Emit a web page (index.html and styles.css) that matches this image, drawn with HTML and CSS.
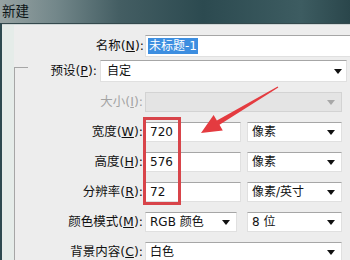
FILE: index.html
```html
<!DOCTYPE html>
<html>
<head>
	<meta charset="utf-8">
	<title>新建</title>
	<link rel="stylesheet" href="styles.css">
</head>
<body>
	<div class="window">
		<div class="titlebar">新建</div>
		<div class="frame">
			<div class="row-name">
				<label class="lbl">名称(<u>N</u>):</label>
				<div class="field"><span class="sel">未标题-1</span></div>
			</div>
			<div class="group">
				<div class="row-preset">
					<label class="lbl">预设(<u>P</u>):</label>
					<div class="field drop">自定</div>
				</div>
				<div class="grid">
					<label class="lbl off">大小(<u>I</u>):</label>
					<div class="field drop wide disabled"></div>

					<label class="lbl">宽度(<u>W</u>):</label>
					<div class="field">720</div>
					<div class="field drop">像素</div>

					<label class="lbl">高度(<u>H</u>):</label>
					<div class="field">576</div>
					<div class="field drop">像素</div>

					<label class="lbl">分辨率(<u>R</u>):</label>
					<div class="field">72</div>
					<div class="field drop">像素/英寸</div>

					<label class="lbl">颜色模式(<u>M</u>):</label>
					<div class="field drop short">RGB 颜色</div>
					<div class="field drop">8 位</div>

					<label class="lbl">背景内容(<u>C</u>):</label>
					<div class="field drop wide">白色</div>
				</div>
			</div>
		</div>
		<!-- annotation over the dialog -->
		<div class="mark"></div>
		<svg class="arrow" width="350" height="260" viewBox="0 0 350 260">
			<polygon fill="#e43b40" points="277.7,86.6 216.9,120.6 213.6,115.0 201,133 222.8,130.4 219.5,124.8 278.3,87.4"/>
		</svg>
	</div>
</body>
</html>
```

FILE: styles.css
```css
*{
	margin: 0;
	padding: 0;
	box-sizing: border-box;
}

body{
	width: 350px;
	height: 260px;
	overflow: hidden;
	background: #ededed;
	font-family: "DejaVu Sans", "Noto Sans CJK SC", sans-serif;
	font-size: 12px;
	color: #111;
}

.window{
	position: relative;
	width: 350px;
	height: 260px;
}

.titlebar{
	height: 23px;
	padding: 3px 0 0 2px;
	font-size: 13.5px;
	line-height: 16px;
	color: #0c1416;
	background: linear-gradient(90deg, #97a3a3 0%, #73878a 16%, #445e63 34%, #2c4a50 58%, #3d5c61 86%, #2a464b 100%);
}

.frame{
	height: 237px;
	border-top: 1px solid #34494d;
	border-left: 2px solid #2d4a50;
	background: linear-gradient(90deg, #e5ece9 0, #e5ece9 12px, #ededed 12px);
	box-shadow: inset 0 1px 0 #cfd6d6;
	padding-top: 11px;
}

.lbl{
	text-align: right;
	white-space: nowrap;
	line-height: 20px;
	font-size: 12.5px;
}

.lbl u{
	text-decoration: underline;
}

.lbl.off{
	color: #a3a3a3;
}

.field{
	height: 20px;
	background: #fff;
	border: 1px solid #e0e0e0;
	border-top-color: #a6a6a6;
	padding-left: 4px;
	line-height: 18px;
	white-space: nowrap;
	display: flex;
	align-items: center;
}

.drop{
	padding-right: 6px;
}

.drop::after{
	content: "";
	margin-left: auto;
	border-left: 4px solid transparent;
	border-right: 4px solid transparent;
	border-top: 5px solid #111;
}

.disabled{
	background: #e4e4e4;
	border-color: #d3d3d3;
}

.disabled::after{
	border-top-color: #a8a8a8;
}

.row-name{
	display: grid;
	grid-template-columns: 130px 220px;
	margin-left: 13px;
}

.row-name .lbl{
	padding-right: 1px;
	line-height: 22px;
}

.row-name .field{
	height: 22px;
	padding-left: 2px;
}

.sel{
	background: #3d8ee0;
	color: #fff;
	padding: 0 1px;
	line-height: 16px;
}

.group{
	margin-top: 3px;
	margin-left: 12px;
	padding-left: 1px;
	background:
		linear-gradient(#a6a6a6, #a6a6a6) 0 7px / 1px 100% no-repeat,
		linear-gradient(#a6a6a6, #a6a6a6) 0 7px / 14px 1px no-repeat;
}

.row-preset{
	display: grid;
	grid-template-columns: 85px 247px;
	margin-bottom: 10px;
}

.row-preset .lbl{
	padding-right: 3px;
	line-height: 22px;
}

.row-preset .field{
	height: 22px;
	padding-left: 6px;
	padding-right: 4px;
}

.grid{
	display: grid;
	grid-template-columns: 124px 96px 95px;
	grid-auto-rows: 20px;
	column-gap: 6px;
	row-gap: 10px;
}

.grid .lbl{
	padding-right: 2px;
	margin-right: -6px;
}

.grid .field{
	grid-column: 2;
}

.grid .field + .field{
	grid-column: 3;
}

.grid .wide{
	grid-column: 2 / 4;
}

.grid .short{
	width: 92px;
}

.mark{
	position: absolute;
	left: 143px;
	top: 117px;
	width: 38px;
	height: 88px;
	border: 3px solid #d8444a;
}

.arrow{
	position: absolute;
	left: 0;
	top: 0;
}
```
